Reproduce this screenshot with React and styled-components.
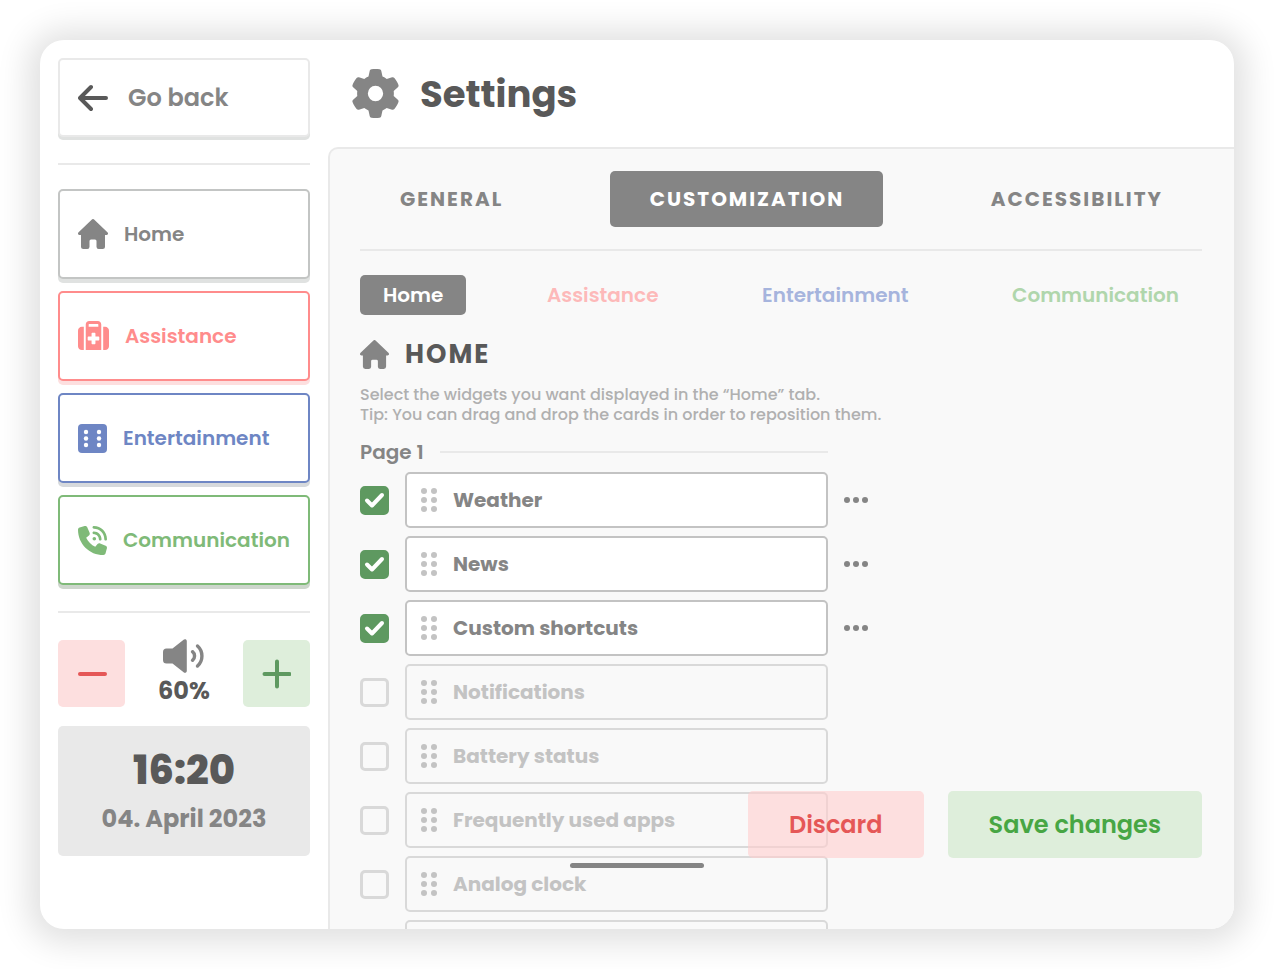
import React, { useState } from "react";
import styled, { createGlobalStyle } from "styled-components";
import { FaSuitcaseMedical, FaPhoneVolume, FaGear } from "react-icons/fa6";

const GlobalStyle = createGlobalStyle`
  * {
    box-sizing: border-box;
  }

  body {
    margin: 0;
    background: #fff;
    color: #595959;
    font-family: Poppins, Inter, sans-serif;
  }

  button {
    font-family: inherit;
    cursor: pointer;
  }
`;

const Page = styled.div`
  height: 100vh;
  padding: 40px;
`;

const Device = styled.div`
  position: relative;
  display: flex;
  height: 100%;
  overflow: hidden;
  background: #fff;
  border-radius: 24px;
  box-shadow: 0 2px 32px 12px rgba(0, 0, 0, 0.12);
`;

const Sidebar = styled.aside`
  flex: 0 0 288px;
  min-width: 0;
  padding: 18px;
`;

const Divider = styled.hr`
  height: 2px;
  margin: 26px 0 24px;
  border: 0;
  background: #e9e9e9;
`;

const BackButton = styled.button`
  display: flex;
  align-items: center;
  gap: 20px;
  width: 100%;
  height: 79px;
  padding: 0 18px;
  border: 2px solid #e9e9e9;
  border-radius: 5px;
  background: #fff;
  box-shadow: 0 3px 0 #e0e2e1;
  color: #858585;
  font-size: 24px;
  font-weight: 600;

  svg {
    color: #595959;
  }
`;

const Nav = styled.nav`
  display: flex;
  flex-direction: column;
  gap: 12px;
`;

const NavLink = styled.a`
  display: flex;
  align-items: center;
  gap: 16px;
  height: 90px;
  padding: 0 18px;
  border: 2px solid ${props => props.$border || props.$color};
  border-radius: 5px;
  background: #fff;
  box-shadow: 0 4px 0 ${props => props.$shadow};
  color: ${props => props.$color};
  font-size: 20px;
  font-weight: 600;
  text-decoration: none;

  svg {
    flex: none;
  }
`;

const Volume = styled.div`
  display: flex;
  align-items: center;
  justify-content: space-between;
  height: 67px;
  margin: 27px 0 19px;
`;

const VolumeButton = styled.button`
  display: flex;
  align-items: center;
  justify-content: center;
  width: 67px;
  height: 67px;
  padding: 0;
  border: 0;
  border-radius: 5px;
  background: ${props => props.$background};
  color: ${props => props.$color};
`;

const VolumeLevel = styled.div`
  display: flex;
  flex-direction: column;
  align-items: center;
  color: #858585;
`;

const VolumeValue = styled.output`
  color: #595959;
  font-size: 24px;
  font-weight: 700;
  line-height: 36px;
`;

const Clock = styled.div`
  padding: 16px 0;
  border-radius: 5px;
  background: #e9e9e9;
  text-align: center;
`;

const Time = styled.div`
  font-size: 40px;
  font-weight: 800;
  line-height: 56px;
`;

const DateText = styled.div`
  color: #858585;
  font-size: 24px;
  font-weight: 700;
  line-height: 42px;
`;

const Main = styled.main`
  display: flex;
  flex: 1;
  flex-direction: column;
  min-width: 0;
`;

const Header = styled.header`
  display: flex;
  flex: 0 0 107px;
  align-items: center;
  gap: 20px;
  padding-left: 23px;
  color: #858585;
`;

const Title = styled.h1`
  margin: 0;
  color: #595959;
  font-size: 37px;
  font-weight: 700;
`;

const Panel = styled.section`
  flex: 1;
  min-height: 0;
  overflow: hidden;
  padding: 22px 32px 0 30px;
  border: solid #e9e9e9;
  border-width: 2px 0 0 2px;
  border-top-left-radius: 10px;
  background: #f9f9f9;
`;

const Tabs = styled.div`
  display: flex;
  justify-content: space-between;
  padding-bottom: 22px;
  border-bottom: 2px solid #e9e9e9;
`;

const Tab = styled.button`
  height: 56px;
  padding: 0 39px 0 40px;
  border: 0;
  border-radius: 5px;
  background: ${props => (props.$active ? "#858585" : "transparent")};
  color: ${props => (props.$active ? "#fff" : "#858585")};
  font-size: 20px;
  font-weight: 700;
  letter-spacing: 2px;
  text-transform: uppercase;
`;

const SubTabs = styled.div`
  display: flex;
  justify-content: space-between;
  margin: 24px 0;
`;

const SubTab = styled.button`
  height: 40px;
  padding: 0 23px;
  border: 0;
  border-radius: 5px;
  background: ${props => (props.$active ? "#858585" : "transparent")};
  color: ${props => (props.$active ? "#fff" : props.$color)};
  font-size: 20px;
  font-weight: 600;
`;

const SectionTitle = styled.h2`
  display: flex;
  align-items: center;
  gap: 16px;
  margin: 0 0 16px;
  font-size: 26px;
  font-weight: 700;
  letter-spacing: 2px;
  line-height: 30px;
  text-transform: uppercase;

  svg {
    color: #858585;
  }
`;

const Hint = styled.p`
  margin: 0;
  color: #b0b0b0;
  font-size: 16px;
  font-weight: 500;
  line-height: 20px;
`;

const PageLabel = styled.h3`
  display: flex;
  align-items: center;
  gap: 16px;
  max-width: 468px;
  margin: 12px 0 5px;
  color: #858585;
  font-size: 20px;
  font-weight: 600;
  line-height: 30px;

  &::after {
    content: "";
    flex: 1;
    height: 2px;
    background: #e9e9e9;
  }
`;

const WidgetList = styled.ul`
  display: flex;
  flex-direction: column;
  gap: 8px;
  max-width: 508px;
  margin: 0;
  padding: 0;
  list-style: none;
`;

const WidgetRow = styled.li`
  display: grid;
  grid-template-columns: 29px 1fr 24px;
  align-items: center;
  gap: 16px;
`;

const CheckBox = styled.span`
  position: relative;
  display: flex;

  input {
    appearance: none;
    width: 29px;
    height: 29px;
    margin: 0;
    border: 3px solid #d9d9d9;
    border-radius: 5px;
    cursor: pointer;
  }

  input:checked {
    border-color: #5e9960;
    background: #5e9960;
  }

  svg {
    position: absolute;
    inset: 0;
    pointer-events: none;
  }
`;

const WidgetCard = styled.label`
  display: flex;
  align-items: center;
  gap: 16px;
  height: 56px;
  padding: 0 14px;
  border: 2px solid ${props => (props.$checked ? "#c3c3c3" : "#d9d9d9")};
  border-radius: 5px;
  background: ${props => (props.$checked ? "#fff" : "transparent")};
  color: ${props => (props.$checked ? "#858585" : "#c3c3c3")};
  font-size: 20px;
  font-weight: 700;
`;

const MoreButton = styled.button`
  display: flex;
  padding: 0;
  border: 0;
  background: none;
  color: #858585;
`;

const Actions = styled.div`
  position: absolute;
  right: 32px;
  bottom: 71px;
  display: flex;
  gap: 24px;
`;

const ActionButton = styled.button`
  height: 67px;
  padding: 0 41px;
  border: 0;
  border-radius: 5px;
  background: ${props => props.$background};
  color: ${props => props.$color};
  font-size: 24px;
  font-weight: 600;
`;

const HomeIndicator = styled.div`
  position: absolute;
  bottom: 61px;
  left: 50%;
  width: 134px;
  height: 5px;
  margin-left: -67px;
  border-radius: 3px;
  background: #858585;
`;

const HouseIcon = ({ size = 30 }) => (
  <svg width={size} height={size} viewBox="0 0 30 30" fill="currentColor">
    <path d="M13.9.5a1.6 1.6 0 0 1 2.2 0l13.3 12.8c1.2 1.1.5 2.7-.9 2.7H27v11.5a2.5 2.5 0 0 1-2.5 2.5h-3.8a2.2 2.2 0 0 1-2.2-2.2V22a1.5 1.5 0 0 0-1.5-1.5h-4a1.5 1.5 0 0 0-1.5 1.5v5.8a2.2 2.2 0 0 1-2.2 2.2H5.5A2.5 2.5 0 0 1 3 27.5V16H1.5c-1.4 0-2.1-1.6-.9-2.7z" />
  </svg>
);

const ArrowIcon = () => (
  <svg
    width="30"
    height="28"
    viewBox="0 0 30 28"
    fill="none"
    stroke="currentColor"
    strokeWidth="4"
    strokeLinecap="round"
    strokeLinejoin="round"
  >
    <path d="M28 14H3M13 3 2 14l11 11" />
  </svg>
);

const DiceIcon = () => (
  <svg width="29" height="29" viewBox="0 0 29 29">
    <rect width="29" height="29" rx="4" fill="currentColor" />
    {[8, 14.5, 21].map(y => (
      <g key={y} fill="#fff">
        <circle cx="8" cy={y} r="2.2" />
        <circle cx="21" cy={y} r="2.2" />
      </g>
    ))}
  </svg>
);

const SpeakerIcon = () => (
  <svg width="41" height="34" viewBox="0 0 41 34" fill="currentColor">
    <path d="M3.5 9.5h6L20.6.7a1.9 1.9 0 0 1 3.2 1.4v29.8a1.9 1.9 0 0 1-3.2 1.4L9.5 24.5h-6A3.5 3.5 0 0 1 0 21v-8a3.5 3.5 0 0 1 3.5-3.5z" />
    <g fill="none" stroke="currentColor" strokeWidth="3.4" strokeLinecap="round">
      <path d="M29.5 12.7a5.5 5.5 0 0 1 0 8.6" />
      <path d="M34.5 7a13.5 13.5 0 0 1 0 20" />
    </g>
  </svg>
);

const MinusIcon = () => (
  <svg width="30" height="30" stroke="currentColor" strokeWidth="4" strokeLinecap="round">
    <path d="M3 15h25" />
  </svg>
);

const PlusIcon = () => (
  <svg width="30" height="30" stroke="currentColor" strokeWidth="4" strokeLinecap="round">
    <path d="M3.5 15h25M16 2.5v25" />
  </svg>
);

const CheckIcon = () => (
  <svg
    width="29"
    height="29"
    fill="none"
    stroke="#fff"
    strokeWidth="4"
    strokeLinecap="round"
    strokeLinejoin="round"
  >
    <path d="M7 14.5l5 5L22 9" />
  </svg>
);

const GripIcon = () => (
  <svg width="16" height="24" viewBox="0 0 16 24" fill="#c3c3c3">
    {[3, 12, 21].map(y => (
      <g key={y}>
        <circle cx="3" cy={y} r="3" />
        <circle cx="13" cy={y} r="3" />
      </g>
    ))}
  </svg>
);

const DotsIcon = () => (
  <svg width="24" height="6" viewBox="0 0 24 6" fill="currentColor">
    <circle cx="3" cy="3" r="3" />
    <circle cx="12" cy="3" r="3" />
    <circle cx="21" cy="3" r="3" />
  </svg>
);

const tabs = ["General", "Customization", "Accessibility"];

const subTabs = [
  { title: "Home", color: "#858585" },
  { title: "Assistance", color: "#fdb9b9" },
  { title: "Entertainment", color: "#a6b4dd" },
  { title: "Communication", color: "#b0d6ac" }
];

const initialWidgets = [
  { title: "Weather", checked: true },
  { title: "News", checked: true },
  { title: "Custom shortcuts", checked: true },
  { title: "Notifications", checked: false },
  { title: "Battery status", checked: false },
  { title: "Frequently used apps", checked: false },
  { title: "Analog clock", checked: false },
  { title: "", checked: false }
];

const Widget = ({ widget, index, onToggle }) => (
  <WidgetRow>
    <CheckBox>
      <input
        id={`widget-${index}`}
        type="checkbox"
        checked={widget.checked}
        onChange={() => onToggle(index)}
      />
      {widget.checked && <CheckIcon />}
    </CheckBox>
    <WidgetCard htmlFor={`widget-${index}`} $checked={widget.checked}>
      <GripIcon />
      {widget.title}
    </WidgetCard>
    {widget.checked && (
      <MoreButton aria-label="More">
        <DotsIcon />
      </MoreButton>
    )}
  </WidgetRow>
);

const App = () => {
  const [tab, setTab] = useState("Customization");
  const [subTab, setSubTab] = useState("Home");
  const [volume, setVolume] = useState(60);
  const [widgets, setWidgets] = useState(initialWidgets);

  const toggleWidget = index =>
    setWidgets(
      widgets.map((w, i) => (i === index ? { ...w, checked: !w.checked } : w))
    );

  return (
    <Page>
      <GlobalStyle />
      <Device>
        <Sidebar>
          <BackButton>
            <ArrowIcon />
            Go back
          </BackButton>
          <Divider />
          <Nav>
            <NavLink href="#home" $color="#858585" $border="#c3c5c4" $shadow="#e0e2e1">
              <HouseIcon />
              Home
            </NavLink>
            <NavLink href="#assistance" $color="#ff8c8c" $shadow="#fddfdf">
              <FaSuitcaseMedical size={31} />
              Assistance
            </NavLink>
            <NavLink href="#entertainment" $color="#6e86c4" $shadow="#d6d9dc">
              <DiceIcon />
              Entertainment
            </NavLink>
            <NavLink href="#communication" $color="#7fba78" $shadow="#cdd6cc">
              <FaPhoneVolume size={29} />
              Communication
            </NavLink>
          </Nav>
          <Divider />
          <Volume>
            <VolumeButton
              aria-label="Volume down"
              $background="#fddfdf"
              $color="#e55757"
              onClick={() => setVolume(Math.max(0, volume - 10))}
            >
              <MinusIcon />
            </VolumeButton>
            <VolumeLevel>
              <SpeakerIcon />
              <VolumeValue>{volume}%</VolumeValue>
            </VolumeLevel>
            <VolumeButton
              aria-label="Volume up"
              $background="#deeedb"
              $color="#5e9960"
              onClick={() => setVolume(Math.min(100, volume + 10))}
            >
              <PlusIcon />
            </VolumeButton>
          </Volume>
          <Clock>
            <Time>16:20</Time>
            <DateText>04. April 2023</DateText>
          </Clock>
        </Sidebar>

        <Main>
          <Header>
            <FaGear size={49} />
            <Title>Settings</Title>
          </Header>
          <Panel>
            <Tabs>
              {tabs.map(t => (
                <Tab key={t} $active={t === tab} onClick={() => setTab(t)}>
                  {t}
                </Tab>
              ))}
            </Tabs>
            <SubTabs>
              {subTabs.map(({ title, color }) => (
                <SubTab
                  key={title}
                  $active={title === subTab}
                  $color={color}
                  onClick={() => setSubTab(title)}
                >
                  {title}
                </SubTab>
              ))}
            </SubTabs>
            <SectionTitle>
              <HouseIcon size={29} />
              Home
            </SectionTitle>
            <Hint>
              Select the widgets you want displayed in the “Home” tab.
              <br />
              Tip: You can drag and drop the cards in order to reposition them.
            </Hint>
            <PageLabel>Page 1</PageLabel>
            <WidgetList>
              {widgets.map((widget, index) => (
                <Widget
                  key={index}
                  widget={widget}
                  index={index}
                  onToggle={toggleWidget}
                />
              ))}
            </WidgetList>
          </Panel>
        </Main>

        <Actions>
          <ActionButton $background="rgba(255, 205, 205, 0.6)" $color="#e55757">
            Discard
          </ActionButton>
          <ActionButton $background="#deeedb" $color="#47a644">
            Save changes
          </ActionButton>
        </Actions>
        <HomeIndicator />
      </Device>
    </Page>
  );
};

export default App;
